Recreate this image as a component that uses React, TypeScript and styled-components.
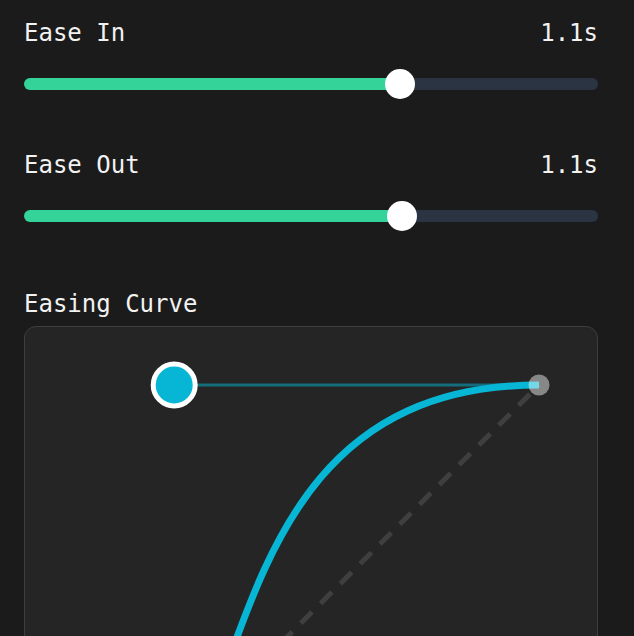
import { useState } from "react";
import styled, { createGlobalStyle } from "styled-components";

const GlobalStyle = createGlobalStyle`
  html, body {
    margin: 0;
    height: 100%;
    overflow: hidden;
    background: #1b1b1b;
  }
  body {
    font-family: "DejaVu Sans Mono", "Liberation Mono", monospace;
    color: #f2f2f2;
  }
`;

const Page = styled.main`
  display: flex;
  flex-direction: column;
  gap: 52px;
  padding: 19px 36px 0 24px;
`;

const Control = styled.section`
  display: flex;
  flex-direction: column;
  gap: 22px;
`;

const LabelRow = styled.div`
  display: flex;
  justify-content: space-between;
  align-items: center;
  font-size: 24px;
  line-height: 28px;
`;

const Label = styled.span`
  color: #f2f2f2;
`;

const Value = styled.span`
  color: #f2f2f2;
`;

const Range = styled.input`
  -webkit-appearance: none;
  appearance: none;
  display: block;
  width: 100%;
  height: 30px;
  margin: 0;
  background: transparent;
  cursor: pointer;

  &::-webkit-slider-runnable-track {
    height: 12px;
    border-radius: 6px;
    background: linear-gradient(
      to right,
      #34d399 0,
      #34d399 var(--fill),
      #2a3442 var(--fill),
      #2a3442 100%
    );
  }

  &::-webkit-slider-thumb {
    -webkit-appearance: none;
    width: 30px;
    height: 30px;
    margin-top: -9px;
    border: none;
    border-radius: 50%;
    background: #ffffff;
  }

  &:focus {
    outline: none;
  }
`;

const CurveSection = styled.section`
  display: flex;
  flex-direction: column;
  gap: 8px;
  margin-top: 7px;
`;

const Card = styled.div`
  border: 1px solid #3e3e3e;
  border-radius: 12px;
  background: #252525;
  overflow: hidden;
`;

const Graph = styled.svg`
  display: block;
  width: 100%;
  height: auto;
`;

const MIN = 0.1;
const MAX = 1.6;
const THUMB = 30;

type SliderProps = {
  label: string;
  value: number;
  onChange: (v: number) => void;
};

const Slider = ({ label, value, onChange }: SliderProps) => {
  const p = (value - MIN) / (MAX - MIN);
  const fill = `calc(${p * 100}% + ${THUMB / 2 - THUMB * p}px)`;
  return (
    <Control>
      <LabelRow>
        <Label>{label}</Label>
        <Value>{value.toFixed(1)}s</Value>
      </LabelRow>
      <Range
        type="range"
        min={MIN}
        max={MAX}
        step={0.005}
        value={value}
        onChange={(e) => onChange(parseFloat(e.target.value))}
        style={{ ["--fill" as any]: fill }}
      />
    </Control>
  );
};

const SIZE = 572;
const PAD = 58;
const SPAN = SIZE - PAD * 2;

const pt = (x: number, y: number) => ({
  x: PAD + x * SPAN,
  y: PAD + (1 - y) * SPAN,
});

const EasingCurve = ({ x1, y1, x2, y2 }: { x1: number; y1: number; x2: number; y2: number }) => {
  const p0 = pt(0, 0);
  const p1 = pt(x1, y1);
  const p2 = pt(x2, y2);
  const p3 = pt(1, 1);
  const d = `M ${p0.x} ${p0.y} C ${p1.x} ${p1.y}, ${p2.x} ${p2.y}, ${p3.x} ${p3.y}`;

  return (
    <Graph viewBox={`0 0 ${SIZE} ${SIZE}`}>
      <line
        x1={p0.x}
        y1={p0.y}
        x2={p3.x}
        y2={p3.y}
        stroke="#3f3f3f"
        strokeWidth={5}
        strokeDasharray="16 12"
      />
      <line x1={p0.x} y1={p0.y} x2={p1.x} y2={p1.y} stroke="#06b6d4" strokeOpacity={0.5} strokeWidth={3} />
      <line x1={p3.x} y1={p3.y} x2={p2.x} y2={p2.y} stroke="#06b6d4" strokeOpacity={0.5} strokeWidth={3} />
      <path d={d} fill="none" stroke="#06b6d4" strokeWidth={7} />
      <circle cx={p0.x} cy={p0.y} r={10.5} fill="#ffffff" fillOpacity={0.45} />
      <circle cx={p3.x} cy={p3.y} r={10.5} fill="#ffffff" fillOpacity={0.45} />
      <circle cx={p1.x} cy={p1.y} r={21} fill="#06b6d4" stroke="#ffffff" strokeWidth={5} />
      <circle cx={p2.x} cy={p2.y} r={21} fill="#06b6d4" stroke="#ffffff" strokeWidth={5} />
    </Graph>
  );
};

export default function App() {
  const [easeIn, setEaseIn] = useState(1.095);
  const [easeOut, setEaseOut] = useState(1.1);

  return (
    <>
      <GlobalStyle />
      <Page>
        <Slider label="Ease In" value={easeIn} onChange={setEaseIn} />
        <Slider label="Ease Out" value={easeOut} onChange={setEaseOut} />
        <CurveSection>
          <LabelRow>
            <Label>Easing Curve</Label>
          </LabelRow>
          <Card>
            <EasingCurve x1={0.42} y1={0} x2={0.2} y2={1} />
          </Card>
        </CurveSection>
      </Page>
    </>
  );
}
